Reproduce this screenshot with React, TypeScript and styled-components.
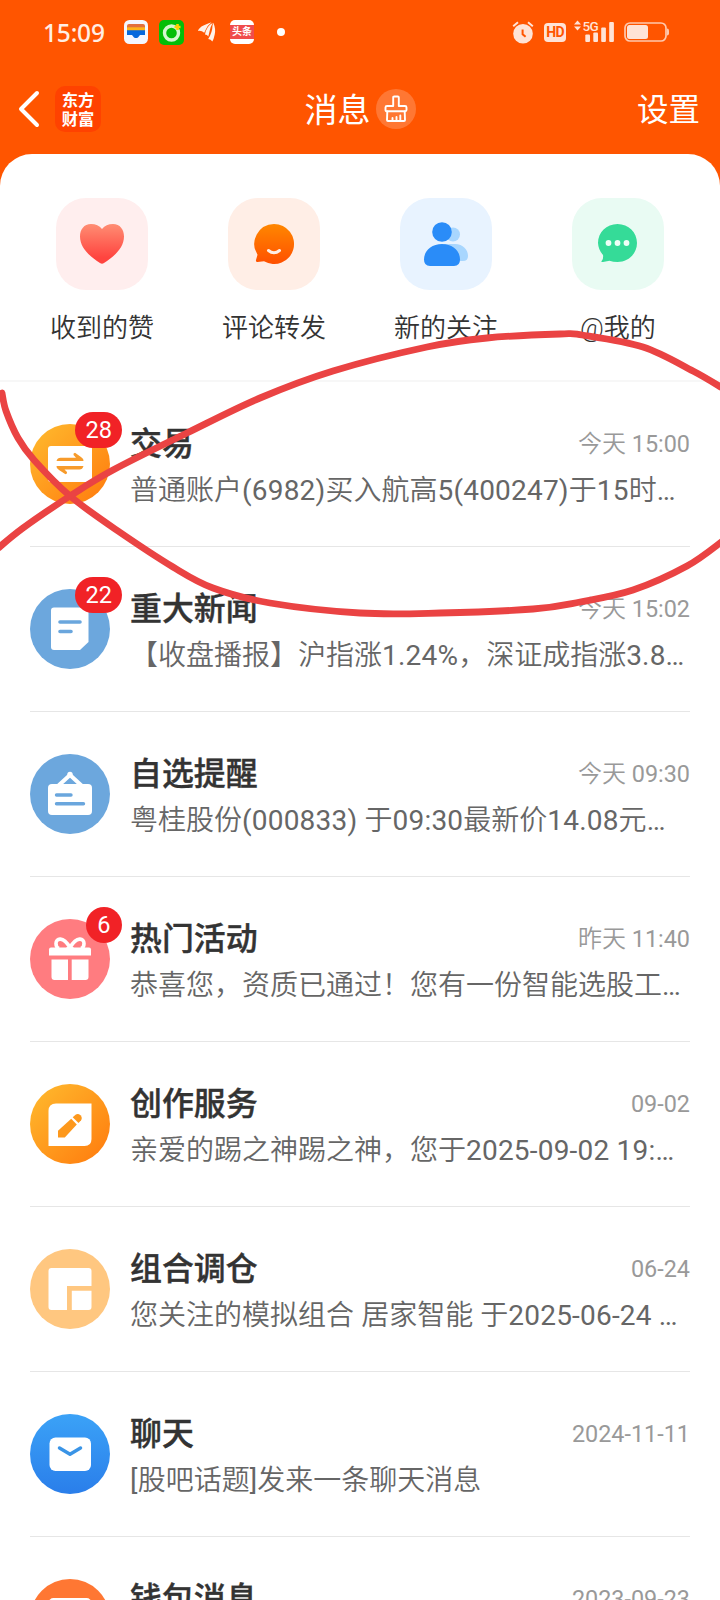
import React from "react";
import styled, { createGlobalStyle } from "styled-components";

const GlobalStyle = createGlobalStyle`
  * { box-sizing: border-box; }
  html, body { margin: 0; padding: 0; background: #fff; }
  body {
    width: 720px;
    height: 1600px;
    overflow: hidden;
    font-family: Roboto, "Noto Sans CJK SC", sans-serif;
    color: #333;
  }
  svg { display: block; flex: none; }
`;

const Screen = styled.div`
  position: relative;
  width: 720px;
  height: 1600px;
  overflow: hidden;
  display: flex;
  flex-direction: column;
  background: #ff5500;
`;

const StatusBar = styled.div`
  height: 64px;
  flex: none;
  display: flex;
  align-items: center;
  justify-content: space-between;
  padding: 0 50px 0 43px;
`;

const StatusGroup = styled.div<{ $gap: number }>`
  display: flex;
  align-items: center;
  gap: ${(p) => p.$gap}px;
`;

const Clock = styled.span`
  font-family: "Noto Sans", Roboto, sans-serif;
  font-size: 24.5px;
  line-height: 24px;
  width: 70px;
  padding-top: 1px;
  letter-spacing: -0.2px;
  color: #ffeee4;
  font-weight: 500;
`;

const HeadlineBadge = styled.span`
  width: 24px;
  height: 24px;
  border-radius: 5px;
  background: linear-gradient(#fff 0 5px, #f04c4c 5px 19px, #fff 19px);
  color: #fff;
  font-size: 10px;
  line-height: 24px;
  font-weight: 700;
  text-align: center;
  white-space: nowrap;
`;

const Dot = styled.span`
  width: 8px;
  height: 8px;
  margin-left: 12px;
  border-radius: 50%;
  background: #fff;
`;

const HdBadge = styled.span`
  width: 22px;
  height: 19px;
  margin-right: -2px;
  border-radius: 4px;
  background: #ffe3d6;
  color: #ff5500;
  font-size: 14px;
  line-height: 19px;
  font-weight: 700;
  text-align: center;
  letter-spacing: -0.8px;
`;

const NavBar = styled.header`
  height: 90px;
  flex: none;
  display: grid;
  grid-template-columns: 1fr auto 1fr;
  align-items: center;
  padding: 0 20px 0 17px;
  color: #fff;
`;

const NavStart = styled.div`
  display: flex;
  align-items: center;
  gap: 14px;
`;

const BrandLogo = styled.div`
  width: 46px;
  height: 46px;
  border-radius: 10px;
  background: #ff4200;
  display: flex;
  align-items: center;
  justify-content: center;
  text-align: center;
  font-family: "Noto Sans CJK SC", sans-serif;
  font-size: 16.3px;
  line-height: 19.5px;
  font-weight: 700;
`;

const NavTitle = styled.h1`
  margin: 0;
  display: flex;
  align-items: center;
  gap: 5px;
  padding-left: 3px;
  font-size: 33px;
  line-height: 44px;
  font-weight: 400;

  > span:first-child {
    padding-top: 4px;
  }
`;

const CleanButton = styled.span`
  width: 40px;
  height: 40px;
  border-radius: 50%;
  background: #ff7733;
  display: grid;
  place-items: center;
`;

const Settings = styled.span`
  justify-self: end;
  padding-top: 4px;
  font-size: 31.5px;
  line-height: 44px;
`;

const Sheet = styled.main`
  flex: 1;
  min-height: 0;
  background: #fff;
  border-radius: 32px 32px 0 0;
  overflow: hidden;
`;

const Shortcuts = styled.nav`
  height: 228px;
  padding: 44px 16px 0;
  display: grid;
  grid-template-columns: repeat(4, 172px);
  border-bottom: 2px solid #f7f7f7;
`;

const Shortcut = styled.div`
  display: flex;
  flex-direction: column;
  align-items: center;
  gap: 19px;
  font-size: 26px;
  line-height: 38px;
  font-weight: 350;
`;

const ShortcutTile = styled.div<{ $tint: string }>`
  width: 92px;
  height: 92px;
  border-radius: 30px;
  background: ${(p) => p.$tint};
`;

const MessageList = styled.div`
  padding: 0 30px;
`;

const MessageRow = styled.article`
  height: 165px;
  display: flex;
  gap: 20px;
  padding-top: 42px;
  border-bottom: 1px solid #e6e6e6;
`;

const Avatar = styled.div<{ $fill: string }>`
  position: relative;
  flex: none;
  width: 80px;
  height: 80px;
  border-radius: 50%;
  background: ${(p) => p.$fill};
`;

const Badge = styled.span`
  position: absolute;
  right: -12px;
  top: -12px;
  min-width: 36px;
  height: 36px;
  padding: 0 10px;
  border-radius: 18px;
  background: #f12226;
  color: #fff;
  font-size: 23.6px;
  line-height: 36px;
  text-align: center;
`;

const MessageBody = styled.div`
  flex: 1;
  min-width: 0;
`;

const MessageHead = styled.div`
  display: flex;
  justify-content: space-between;
  align-items: center;
  height: 40px;
`;

const MessageTitle = styled.h2`
  margin: 0;
  font-size: 31.9px;
  line-height: 40px;
  font-weight: 500;
  -webkit-text-stroke: 0.4px currentColor;
`;

const MessageTime = styled.time`
  font-size: 24px;
  line-height: 32px;
  font-weight: 350;
  color: #999;
`;

const TimeFigures = styled.span`
  font-size: 23.4px;
  font-weight: 400;
`;

const Preview = styled.p`
  margin: 6px 0 0;
  font-size: 28px;
  line-height: 42px;
  font-weight: 350;
  color: #666;
  white-space: nowrap;
`;

const Figures = styled.span`
  letter-spacing: 0.2px;
  font-weight: 400;
`;

const Markup = styled.svg`
  position: absolute;
  inset: 0;
  pointer-events: none;
`;

const CardsIcon = () => (
  <svg width="24" height="24" viewBox="0 0 24 24">
    <rect width="24" height="24" rx="5.5" fill="#f4f7ff" />
    <path d="M3 8V6q0-2 2-2h14q2 0 2 2v2z" fill="#e2703c" />
    <path d="M3 7.300h18v4H3z" fill="#ffb31a" />
    <path d="M3 10.300h18V15h-5l-2 2.400q-2 1.200-4 0L8 15H3z" fill="#0668dc" />
  </svg>
);

const RingIcon = () => (
  <svg width="25" height="25" viewBox="0 0 25 25">
    <rect width="25" height="25" rx="5" fill="#04be08" />
    <circle cx="12.500" cy="13" r="7" fill="none" stroke="#d5f7d0" strokeWidth="3.400" />
    <path d="M18.500 4v6M15.500 7h6" stroke="#ffd000" strokeWidth="2.600" />
  </svg>
);

const WingSvg = styled.svg`
  margin: 0 3px;
`;

const WingIcon = () => (
  <WingSvg width="18" height="20" viewBox="0 0 18 20" fill="#fff3ea">
    <path d="M0 9Q1 5.500 5.500 3.500Q9.500 1.500 13.500 .3Q9.500 3.500 7.800 7.500L6.200 10.800Q3.500 8.300 0 9z" />
    <path d="M7 12.500Q8.500 4 14.800 .8Q12 5.500 11.500 9.500L10.300 14.500Q9.300 12.500 7 12.500z" />
    <path d="M10.200 17Q14.500 10 14.500 3.500L15.300 .8Q18 7 16.700 12.500Q15.700 17.500 14.300 19.500Q13 17 10.200 17z" />
  </WingSvg>
);

const AlarmIcon = () => (
  <svg width="22" height="23" viewBox="0 0 22 23">
    <circle cx="11" cy="12.800" r="9.800" fill="#ffe3d6" />
    <path d="M1.200 5.200L6 1.300M20.800 5.200L16 1.300" stroke="#ffe3d6" strokeWidth="2" />
    <path d="M10.600 8.500v4.800l3 2.500" fill="none" stroke="#ff5500" strokeWidth="2" />
  </svg>
);

const SignalIcon = () => (
  <svg width="40" height="24" viewBox="0 0 40 24" fill="#ffe3d6" overflow="visible">
    <path d="M0 4.500L3.500 .500L7 4.500zM0 6.500L3.500 10.500L7 6.500z" />
    <text x="8.500" y="10.500" fontSize="13.500" fontWeight="500" letterSpacing="-.6">5G</text>
    <rect x="11.300" y="14.500" width="4.700" height="7.500" rx="1" />
    <rect x="19.300" y="12.500" width="4.700" height="9.500" rx="1" />
    <rect x="27.200" y="7.500" width="4.700" height="14.500" rx="1" />
    <rect x="35.200" y="2" width="4.700" height="20" rx="1" />
  </svg>
);

const BatteryIcon = () => (
  <svg width="46" height="20" viewBox="0 0 46 20">
    <rect x="1" y="1" width="41" height="18" rx="5" fill="none" stroke="#ffc8ad" strokeWidth="1.700" />
    <rect x="3" y="3" width="21" height="14" rx="2.500" fill="#ffe3d6" />
    <path d="M43 6.500q2 0 2 2v3q0 2-2 2z" fill="#ffc8ad" />
  </svg>
);

const BackIcon = () => (
  <svg width="24" height="38" viewBox="0 0 24 38">
    <path d="M20 3L4 19l16 16" fill="none" stroke="#fff" strokeWidth="4" strokeLinecap="round" strokeLinejoin="round" />
  </svg>
);

const BroomIcon = () => (
  <svg width="24" height="28" viewBox="0 0 24 28" fill="none" stroke="#fff" strokeWidth="1.900" strokeLinejoin="round" strokeLinecap="round">
    <path d="M9.200 11V2.500q0-1 1-1h3.600q1 0 1 1V11h6.200q1.500 0 1.500 1.500V15q0 1.200-1.500 1.200H3Q1.500 16.200 1.500 15v-2.500Q1.500 11 3 11z" />
    <path d="M3.300 16.500L3 25q0 1 1 1h16q1 0 1-1l-.3-8.500M8.500 25.500V23M12.500 25.500V22M16.300 25.500V20.500" />
  </svg>
);

const HeartIcon = () => (
  <svg width="92" height="92" viewBox="0 0 92 92">
    <defs>
      <linearGradient id="heart" x2="0" y2="1">
        <stop stopColor="#ff8d73" />
        <stop offset=".85" stopColor="#ff443f" />
      </linearGradient>
    </defs>
    <path d="M46 31Q42 26 35 26C28 26 24 31.500 24 38.500C24 50 34 58.500 44 65Q46 66.500 48 65C58 58.500 68 50 68 38.500C68 31.500 64 26 57 26Q50 26 46 31z" fill="url(#heart)" />
  </svg>
);

const SmileIcon = () => (
  <svg width="92" height="92" viewBox="0 0 92 92">
    <defs>
      <linearGradient id="smile" x2="0" y2="1">
        <stop stopColor="#ff8700" />
        <stop offset="1" stopColor="#ff5000" />
      </linearGradient>
    </defs>
    <path d="M46 26a20 20 0 1 1-10 37.300L29.500 64q-2 0-1.500-2l1.500-5.200A20 20 0 0 1 46 26z" fill="url(#smile)" />
    <path d="M40.500 52.500q5.500 4.500 11 0" fill="none" stroke="#ffeee6" strokeWidth="3" strokeLinecap="round" />
  </svg>
);

const PeopleIcon = () => (
  <svg width="92" height="92" viewBox="0 0 92 92">
    <circle cx="53" cy="36.500" r="7" fill="#a8d6fe" />
    <path d="M44 46h11c8 0 13 6 13 12q0 5-5 5H48z" fill="#a8d6fe" />
    <circle cx="42" cy="34" r="9.800" fill="#2a8cf8" />
    <path d="M42 46C31 46 24 53 24 61.500Q24 68 30 68h24q6 0 6-6.500C60 53 53 46 42 46z" fill="#2a8cf8" />
  </svg>
);

const ChatIcon = () => (
  <svg width="92" height="92" viewBox="0 0 92 92">
    <path d="M45.500 26C56.500 26 65 34.500 65 45S56.500 64 45.500 64q-4.500 0-8-1.200L31 64q-3 .3-1-1.500 1.500-2 1-5.500A19 19 0 0 1 26 45c0-10.500 8.500-19 19.500-19z" fill="#35db98" />
    <g fill="#effff7">
      <circle cx="36.500" cy="45" r="2.900" />
      <circle cx="45.500" cy="45" r="2.900" />
      <circle cx="54.500" cy="45" r="2.900" />
    </g>
  </svg>
);

const TradeIcon = () => (
  <svg width="80" height="80" viewBox="0 0 80 80">
    <rect x="18" y="22" width="44" height="36" rx="3" fill="#fff" />
    <path d="M26.500 37q1-3.200 4-3.200H46L43.500 31q-.5-2 1.500-2.200L51 33q3 2 2.500 4zM53.500 42q-1 3.500-4 3.500H34.500L37 48q.5 2-1.500 2.200L29 46q-3-2-2.500-4z" fill="#f79b2b" />
  </svg>
);

const NoteIcon = () => (
  <svg width="80" height="80" viewBox="0 0 80 80">
    <path d="M24 18.500h31.500q3 0 3 3V53L50 61H24q-3 0-3-3V21.500q0-3 3-3z" fill="#fff" />
    <path d="M30 33h20M30 42.500h11" stroke="#6aa6dd" strokeWidth="3.600" strokeLinecap="round" />
  </svg>
);

const SignboardIcon = () => (
  <svg width="80" height="80" viewBox="0 0 80 80">
    <path d="M28 32L40 21L52 32" fill="none" stroke="#fff" strokeWidth="4" />
    <circle cx="40" cy="20.500" r="2.700" fill="#fff" />
    <rect x="18" y="30" width="44" height="31" rx="4" fill="#fff" />
    <path d="M26.500 41h14.500M26.500 49.700h27" stroke="#6aa6dd" strokeWidth="3.400" strokeLinecap="round" />
  </svg>
);

const GiftIcon = () => (
  <svg width="80" height="80" viewBox="0 0 80 80" fill="#fff">
    <path d="M40 28.500C33 17 26 19 26 24.500q0 4 3 5M40 28.500C47 17 54 19 54 24.500q0 4-3 5M40 28l-6 5M40 28l6 5" fill="none" stroke="#fff" strokeWidth="3.600" />
    <path d="M21 28.500h38q2 0 2 2v6h-42v-6q0-2 2-2z" />
    <path d="M21.500 40.500H38V61H24.500q-3 0-3-3zM41.700 40.500H58.500V58q0 3-3 3H41.700z" />
  </svg>
);

const PencilIcon = () => (
  <svg width="80" height="80" viewBox="0 0 80 80">
    <path d="M26 19.500h35.500V55q0 7-7 7H18.500V27q0-7.500 7.500-7.500z" fill="#fff" />
    <g fill="#fd981c">
      <path d="M28 46.800L41.200 34.800L46.800 40.400L34.800 53.500H28z" />
      <path d="M42.700 33.200L45.500 30.700q2.500-1.600 5 .6 2.200 2.500.6 5l-2.600 2.800z" />
    </g>
  </svg>
);

const LayoutIcon = () => (
  <svg width="80" height="80" viewBox="0 0 80 80" fill="#fff">
    <path d="M21.500 19h37q3 0 3 3v15H37v24H21.500q-3 0-3-3V22q0-3 3-3z" />
    <path d="M41.800 41.800h19.700V58q0 3-3 3H41.800z" />
  </svg>
);

const MailIcon = () => (
  <svg width="80" height="80" viewBox="0 0 80 80">
    <rect x="19.500" y="23.500" width="41.500" height="33.500" rx="6" fill="#fff" />
    <path d="M29.500 34L40 40.200L50.500 34" fill="none" stroke="#3a94e6" strokeWidth="3.500" strokeLinecap="round" strokeLinejoin="round" />
  </svg>
);

const WalletIcon = () => (
  <svg width="80" height="80" viewBox="0 0 80 80">
    <rect x="18.500" y="19" width="43" height="40" rx="5" fill="#fff" />
  </svg>
);

const shortcuts = [
  { label: "收到的赞", tint: "#ffeeee", Icon: HeartIcon },
  { label: "评论转发", tint: "#ffeee6", Icon: SmileIcon },
  { label: "新的关注", tint: "#e8f3ff", Icon: PeopleIcon },
  { label: "@我的", tint: "#e9fbf3", Icon: ChatIcon },
];

const orange = "linear-gradient(135deg, #ffb52b 10%, #ff8010 90%)";

const messages = [
  { title: "交易", time: "今天 15:00", text: "普通账户(6982)买入航高5(400247)于15时…", fill: orange, Icon: TradeIcon, count: 28 },
  { title: "重大新闻", time: "今天 15:02", text: "【收盘播报】沪指涨1.24%，深证成指涨3.8…", fill: "#6ca7dd", Icon: NoteIcon, count: 22 },
  { title: "自选提醒", time: "今天 09:30", text: "粤桂股份(000833) 于09:30最新价14.08元…", fill: "#6ca7dd", Icon: SignboardIcon },
  { title: "热门活动", time: "昨天 11:40", text: "恭喜您，资质已通过！您有一份智能选股工…", fill: "#ff7c80", Icon: GiftIcon, count: 6 },
  { title: "创作服务", time: "09-02", text: "亲爱的踢之神踢之神，您于2025-09-02 19:…", fill: orange, Icon: PencilIcon },
  { title: "组合调仓", time: "06-24", text: "您关注的模拟组合 居家智能 于2025-06-24 …", fill: "#ffc780", Icon: LayoutIcon },
  { title: "聊天", time: "2024-11-11", text: "[股吧话题]发来一条聊天消息", fill: "linear-gradient(#3ba2f7, #2a7eea)", Icon: MailIcon },
  { title: "钱包消息", time: "2023-09-23", text: "", fill: "#ff7733", Icon: WalletIcon },
];

type Point = [number, number];

const crossingStroke: Point[] = [
  [2, 393], [6, 411], [18, 438], [34, 460], [70, 496], [118, 531], [173, 567], [213, 588], [270, 603],
  [360, 613], [440, 613], [533, 609], [580, 602], [633, 590], [687, 566], [724, 540],
];

const upperStroke: Point[] = [
  [-4, 550], [23, 528], [70, 496], [113, 470], [187, 433], [260, 398], [333, 371], [427, 347],
  [487, 338], [560, 334], [582, 335], [643, 347], [693, 371], [724, 389],
];

// Catmull-Rom spline through the points, written as cubic segments.
const spline = (pts: Point[]) =>
  pts.slice(0, -1).reduce((d, p1, i) => {
    const p0 = pts[i - 1] ?? p1;
    const p2 = pts[i + 1];
    const p3 = pts[i + 2] ?? p2;
    const c = [
      p1[0] + (p2[0] - p0[0]) / 6, p1[1] + (p2[1] - p0[1]) / 6,
      p2[0] - (p3[0] - p1[0]) / 6, p2[1] - (p3[1] - p1[1]) / 6,
      p2[0], p2[1],
    ];
    return `${d}C${c.map((n) => n.toFixed(1)).join(" ")}`;
  }, `M${pts[0].join(" ")}`);

// Latin runs are set in their own element so digits keep their weight and tracking.
const splitRuns = (text: string, Run: React.ElementType) =>
  text.split(/([\x20-\x7e…]+)/).map((part, i) => (i % 2 ? <Run key={i}>{part}</Run> : part));

export default function App() {
  return (
    <>
      <GlobalStyle />
      <Screen>
        <StatusBar>
          <StatusGroup $gap={11}>
            <Clock>15:09</Clock>
            <CardsIcon />
            <RingIcon />
            <WingIcon />
            <HeadlineBadge>头条</HeadlineBadge>
            <Dot />
          </StatusGroup>
          <StatusGroup $gap={10}>
            <AlarmIcon />
            <HdBadge>HD</HdBadge>
            <SignalIcon />
            <BatteryIcon />
          </StatusGroup>
        </StatusBar>
        <NavBar>
          <NavStart>
            <BackIcon />
            <BrandLogo>
              东方
              <br />
              财富
            </BrandLogo>
          </NavStart>
          <NavTitle>
            <span>消息</span>
            <CleanButton>
              <BroomIcon />
            </CleanButton>
          </NavTitle>
          <Settings>设置</Settings>
        </NavBar>
        <Sheet>
          <Shortcuts>
            {shortcuts.map(({ label, tint, Icon }) => (
              <Shortcut key={label}>
                <ShortcutTile $tint={tint}>
                  <Icon />
                </ShortcutTile>
                {label}
              </Shortcut>
            ))}
          </Shortcuts>
          <MessageList>
            {messages.map(({ title, time, text, fill, Icon, count }) => (
              <MessageRow key={title}>
                <Avatar $fill={fill}>
                  <Icon />
                  {count && <Badge>{count}</Badge>}
                </Avatar>
                <MessageBody>
                  <MessageHead>
                    <MessageTitle>{title}</MessageTitle>
                    <MessageTime>{splitRuns(time, TimeFigures)}</MessageTime>
                  </MessageHead>
                  <Preview>{splitRuns(text, Figures)}</Preview>
                </MessageBody>
              </MessageRow>
            ))}
          </MessageList>
        </Sheet>
        <Markup width="720" height="1600" viewBox="0 0 720 1600" fill="none" stroke="#ea4343" strokeWidth="6.800" strokeLinecap="round" strokeLinejoin="round">
          <path d={spline(crossingStroke)} />
          <path d={spline(upperStroke)} />
        </Markup>
      </Screen>
    </>
  );
}
